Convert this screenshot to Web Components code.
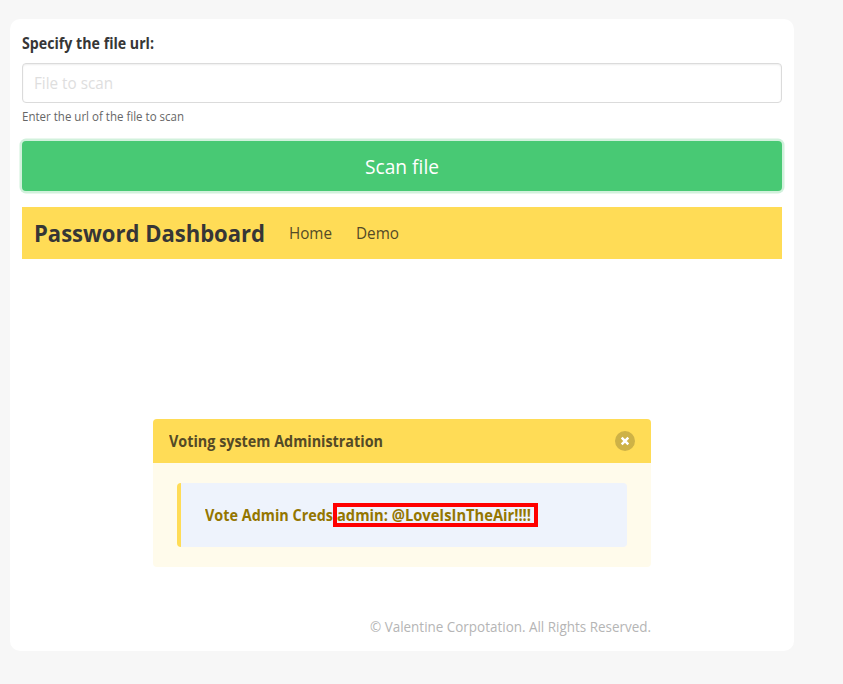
<!DOCTYPE html>
<html lang="en"><head><meta charset="utf-8"><title>Password Dashboard</title>
<style>
body{margin:0;background:#f7f7f7;font-family:"Open Sans","Noto Sans",sans-serif;font-size:16px;line-height:24px;color:#363636;padding:19px 49px 33px 10px;height:632px}
</style></head><body>
<scan-page></scan-page>
<script>
const define=(name,html,ready)=>{
  const t=document.createElement('template');t.innerHTML=html;
  customElements.define(name,class extends HTMLElement{
    constructor(){super();this.attachShadow({mode:'open'}).append(t.content.cloneNode(true));}
    connectedCallback(){if(ready)ready(this);}
  });
};
/* Text run set to a fixed advance width */
define('fit-text',`<style>:host{display:block;white-space:nowrap}span{display:inline-block;transform-origin:0 50%}</style><span><slot></slot></span>`,el=>{
  const s=el.shadowRoot.querySelector('span'),w=+el.getAttribute('w');
  el.style.width=w+'px';
  s.style.transform='scaleX('+w/s.getBoundingClientRect().width+')';
});
define('file-field',`<style>
:host{display:block}
.label{font-weight:700;height:24px;margin-bottom:8px}
.input{box-sizing:border-box;height:40px;border:1px solid #dbdbdb;border-radius:4px;box-shadow:inset 0 1px 2px rgba(10,10,10,.07);padding:7px 11px;color:#dedede}
.help{font-size:12px;line-height:18px;margin-top:5px;color:#666}
</style><div class="label"><fit-text w="132">Specify the file url:</fit-text></div>
<div class="input"><fit-text w="79">File to scan</fit-text></div>
<div class="help"><fit-text w="162">Enter the url of the file to scan</fit-text></div>`);
define('scan-button',`<style>
:host{display:flex;justify-content:center;align-items:center;box-sizing:border-box;height:50px;margin-top:15px;border-radius:4px;background:#48c974;color:#fff;font-size:20px;line-height:30px;box-shadow:0 0 0 2.5px rgba(72,199,116,.25);padding-top:2px}
</style><fit-text w="74"><slot></slot></fit-text>`);
define('nav-bar',`<style>
:host{display:flex;align-items:center;box-sizing:border-box;height:52px;margin-top:16px;background:#ffdc56;padding:0 12px;color:#544a26}
.brand{font-size:23.5px;font-weight:700;color:#363636;margin-right:24px}.home{margin-right:24px}
</style><fit-text class="brand" w="231">Password Dashboard</fit-text><fit-text class="home" w="43">Home</fit-text><fit-text w="43">Demo</fit-text>`);
define('close-button',`<style>:host{display:block;width:20px;height:20px}svg{display:block}</style>
<svg width="20" height="20" viewBox="0 0 20 20"><circle cx="10" cy="10" r="10" fill="#0a0a0a" fill-opacity=".2"/><path d="M6.7 6.7 13.3 13.3M13.3 6.7 6.7 13.3" stroke="#fff" stroke-width="2.5"/></svg>`);
define('admin-message',`<style>
:host{display:block;margin:160px auto 0;width:498px;border-radius:4px;overflow:hidden;background:#fffbeb}
header{display:flex;align-items:center;justify-content:space-between;box-sizing:border-box;height:44px;padding:0 16px;background:#ffdc56;color:#544a26;font-weight:700}
.body{padding:20px 24px}
.quote{display:flex;align-items:center;box-sizing:border-box;height:64px;border-left:4px solid #ffdc56;border-radius:4px;background:#eef3fc;padding-left:24px;color:#947600;font-weight:700}
.mark{display:block;box-sizing:border-box;width:205px;height:24px;border:4px solid red;line-height:16px}
.mark fit-text{line-height:17px;height:16px}
</style><header><fit-text w="214">Voting system Administration</fit-text><close-button></close-button></header>
<div class="body"><div class="quote"><fit-text w="128">Vote Admin Creds</fit-text><span class="mark"><fit-text w="194">admin: @LoveIsInTheAir!!!!</fit-text></span></div></div>`);
define('page-footer',`<style>:host{display:flex;justify-content:flex-end;width:498px;margin:48px auto 0;font-size:14px;line-height:24px;color:#b5b5b5}</style><fit-text w="281">© Valentine Corpotation. All Rights Reserved.</fit-text>`);
define('scan-page',`<style>:host{display:block;box-sizing:border-box;width:784px;height:632px;border-radius:10px;background:#fff;padding:12px}</style>
<file-field></file-field><scan-button>Scan file</scan-button><nav-bar></nav-bar><admin-message></admin-message><page-footer></page-footer>`);
</script></body></html>
